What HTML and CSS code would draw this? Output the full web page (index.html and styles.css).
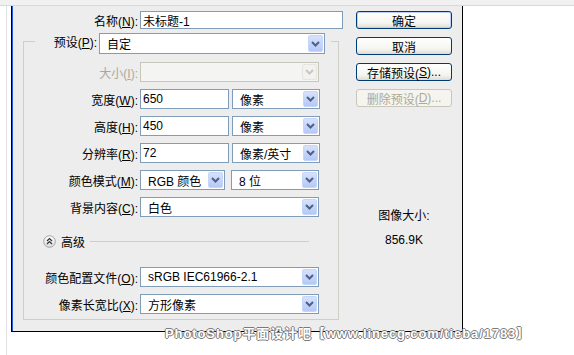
FILE: index.html
```html
<!DOCTYPE html>
<html lang="zh-CN">
  <head>
    <meta charset="UTF-8" />
    <title>新建</title>
    <link rel="stylesheet" href="styles.css">
  </head>
  <body>
    <div class="topbar"></div>
    <div class="stage">
      <div class="guide"></div>
      <div class="dialog">
        <div class="form">
          <div class="row name-row">
            <label class="lbl">名称(<u>N</u>):</label>
            <div class="input name">未标题-1</div>
          </div>

          <div class="group">
            <div class="group-head">
              <span class="seg seg-l"></span>
              <label class="lbl head-lbl">预设(<u>P</u>):</label>
              <div class="select preset">
                <span class="val">自定</span>
                <span class="arrow"><svg width="9" height="6" viewBox="0 0 9 6"><path d="M1 1 L4.5 4.5 L8 1" /></svg></span>
              </div>
              <span class="seg seg-r"></span>
            </div>

            <div class="group-body">
              <div class="row">
                <label class="lbl off">大小(<u>I</u>):</label>
                <div class="select full disabled">
                  <span class="val"></span>
                  <span class="arrow"><svg width="9" height="6" viewBox="0 0 9 6"><path d="M1 1 L4.5 4.5 L8 1" /></svg></span>
                </div>
              </div>
              <div class="row">
                <label class="lbl">宽度(<u>W</u>):</label>
                <div class="input num">650</div>
                <div class="select unit">
                  <span class="val">像素</span>
                  <span class="arrow"><svg width="9" height="6" viewBox="0 0 9 6"><path d="M1 1 L4.5 4.5 L8 1" /></svg></span>
                </div>
              </div>
              <div class="row">
                <label class="lbl">高度(<u>H</u>):</label>
                <div class="input num">450</div>
                <div class="select unit">
                  <span class="val">像素</span>
                  <span class="arrow"><svg width="9" height="6" viewBox="0 0 9 6"><path d="M1 1 L4.5 4.5 L8 1" /></svg></span>
                </div>
              </div>
              <div class="row">
                <label class="lbl">分辨率(<u>R</u>):</label>
                <div class="input num">72</div>
                <div class="select unit">
                  <span class="val">像素/英寸</span>
                  <span class="arrow"><svg width="9" height="6" viewBox="0 0 9 6"><path d="M1 1 L4.5 4.5 L8 1" /></svg></span>
                </div>
              </div>
              <div class="row">
                <label class="lbl">颜色模式(<u>M</u>):</label>
                <div class="select mode">
                  <span class="val">RGB 颜色</span>
                  <span class="arrow"><svg width="9" height="6" viewBox="0 0 9 6"><path d="M1 1 L4.5 4.5 L8 1" /></svg></span>
                </div>
                <div class="select unit bits">
                  <span class="val">8 位</span>
                  <span class="arrow"><svg width="9" height="6" viewBox="0 0 9 6"><path d="M1 1 L4.5 4.5 L8 1" /></svg></span>
                </div>
              </div>
              <div class="row">
                <label class="lbl">背景内容(<u>C</u>):</label>
                <div class="select full">
                  <span class="val">白色</span>
                  <span class="arrow"><svg width="9" height="6" viewBox="0 0 9 6"><path d="M1 1 L4.5 4.5 L8 1" /></svg></span>
                </div>
              </div>

              <div class="adv">
                <svg class="adv-icon" width="13" height="13" viewBox="0 0 13 13">
                  <defs>
                    <linearGradient id="knob" x1="0" y1="0" x2="0" y2="1">
                      <stop offset="0" stop-color="#ffffff" />
                      <stop offset="1" stop-color="#dcdcdc" />
                    </linearGradient>
                  </defs>
                  <circle cx="6.5" cy="6.5" r="5.8" fill="url(#knob)" stroke="#a4a4a4" />
                  <path d="M4 6 L6.5 3.5 L9 6 M4 9 L6.5 6.5 L9 9" fill="none" stroke="#333" stroke-width="1.2" />
                </svg>
                <span class="adv-text">高级</span>
                <span class="adv-line"></span>
              </div>

              <div class="row">
                <label class="lbl">颜色配置文件(<u>O</u>):</label>
                <div class="select full">
                  <span class="val">sRGB IEC61966-2.1</span>
                  <span class="arrow"><svg width="9" height="6" viewBox="0 0 9 6"><path d="M1 1 L4.5 4.5 L8 1" /></svg></span>
                </div>
              </div>
              <div class="row last">
                <label class="lbl">像素长宽比(<u>X</u>):</label>
                <div class="select full">
                  <span class="val">方形像素</span>
                  <span class="arrow"><svg width="9" height="6" viewBox="0 0 9 6"><path d="M1 1 L4.5 4.5 L8 1" /></svg></span>
                </div>
              </div>
            </div>
          </div>
        </div>

        <div class="side">
          <button class="btn default">确定</button>
          <button class="btn">取消</button>
          <button class="btn">存储预设(<u>S</u>)...</button>
          <button class="btn disabled">删除预设(<u>D</u>)...</button>
          <div class="info">
            <p>图像大小:</p>
            <p class="size">856.9K</p>
          </div>
        </div>
      </div>
    </div>
    <div class="watermark">PhotoShop平面设计吧【www.linecg.com/tieba/1783】</div>
  </body>
</html>
```

FILE: styles.css
```css
* {
  padding: 0;
  margin: 0;
  box-sizing: border-box;
}
body {
  width: 574px;
  height: 355px;
  overflow: hidden;
  position: relative;
  background-color: #ffffff;
  color: #000000;
  font-family: "Liberation Sans", "Noto Sans CJK SC", sans-serif;
  font-size: 12px;
}
u {
  text-decoration: underline;
  text-underline-offset: 1px;
}
.topbar {
  height: 6px;
  background-color: #f1f1f1;
  border-bottom: 1px solid #d9d9d9;
}
.stage {
  display: flex;
  height: 349px;
  padding-left: 6px;
}
.guide {
  width: 1px;
  background-color: #e2e2e2;
}
.dialog {
  display: flex;
  width: 452px;
  height: 326px;
  margin-left: 4px;
  padding-top: 5px;
  background-color: #ededed;
  border: 1px solid #000000;
  border-top: 0;
  box-shadow: inset 1px 0 0 #2a5bd7;
}
.form {
  width: 331px;
}
.row {
  display: flex;
  align-items: center;
  height: 20px;
  margin-bottom: 7px;
}
.row.last {
  margin-bottom: 0;
}
.name-row {
  height: 18px;
  margin-bottom: 4px;
}
.lbl {
  flex: none;
  text-align: right;
  white-space: nowrap;
  padding-right: 2px;
}
.lbl.off {
  color: #aca899;
}
.name-row .lbl {
  width: 128px;
}
.input,
.select {
  display: flex;
  align-items: center;
  height: 100%;
  background-color: #ffffff;
  border: 1px solid #7f9db9;
  white-space: nowrap;
}
.input {
  padding-left: 2px;
}
.input.name {
  width: 203px;
}
.select {
  padding: 1px;
}
.select .val {
  flex: 1;
  padding-left: 6px;
}
.arrow {
  display: flex;
  align-items: center;
  justify-content: center;
  width: 15px;
  height: 100%;
  background: linear-gradient(#d6e1fd, #b5c8f6);
  border: 1px solid #c6d5fc;
  border-radius: 2px;
}
.arrow path {
  fill: none;
  stroke: #4d6185;
  stroke-width: 2;
}
.select.disabled {
  background-color: #f4f4f2;
  border-color: #c9c7ba;
}
.select.disabled .arrow {
  background: #f2f2f0;
  border-color: #e4e4e0;
}
.select.disabled .arrow path {
  stroke: #c9c7ba;
}

/* group box */
.group {
  width: 316px;
  margin-left: 11px;
}
.group-head {
  display: flex;
  height: 21px;
}
.seg {
  height: 13px;
  margin-top: 8px;
  border-top: 1px solid #cfcfc6;
}
.seg-l {
  width: 12px;
  border-left: 1px solid #cfcfc6;
}
.seg-r {
  width: 8px;
  margin-left: 6px;
  border-right: 1px solid #cfcfc6;
}
.head-lbl {
  width: 64px;
  line-height: 21px;
}
.select.preset {
  width: 226px;
}
.group-body {
  padding: 8px 0 5px;
  border: 1px solid #cfcfc6;
  border-top: 0;
}
.group-body .lbl {
  width: 116px;
}
.select.full {
  width: 179px;
}
.input.num {
  width: 89px;
}
.select.unit {
  width: 88px;
  margin-left: 3px;
}
.select.mode {
  width: 85px;
}
.select.bits {
  margin-left: 6px;
}
.adv {
  display: flex;
  align-items: center;
  height: 20px;
  margin: 14px 0 16px;
  padding-left: 19px;
}
.adv-text {
  margin-left: 5px;
}
.adv-line {
  flex: 1;
  height: 1px;
  margin: 0 29px 0 5px;
  background-color: #cfcfc6;
}

/* buttons column */
.side {
  width: 96px;
  margin-left: 13px;
}
.btn {
  display: flex;
  align-items: center;
  justify-content: center;
  width: 100%;
  height: 18px;
  margin-bottom: 8px;
  font: inherit;
  color: #000000;
  background: linear-gradient(#ffffff, #f4f4f0 70%, #dedbd2);
  border: 1px solid #003c74;
  border-radius: 3px;
}
.btn.default {
  box-shadow: inset 0 0 0 1px #bcd0f7;
}
.btn.disabled {
  color: #aca899;
  background: #f5f4ee;
  border-color: #c9c7ba;
}
.info {
  margin-top: 102px;
  text-align: center;
  line-height: 14px;
}
.info .size {
  margin-top: 10px;
}
.watermark {
  position: absolute;
  left: 165px;
  top: 326px;
  font-weight: bold;
  font-size: 13px;
  line-height: 16px;
  letter-spacing: 0.9px;
  color: #ffffff;
  white-space: nowrap;
  text-shadow: 1px 0 #7a7a7a, -1px 0 #7a7a7a, 0 1px #7a7a7a, 0 -1px #7a7a7a;
}
```
